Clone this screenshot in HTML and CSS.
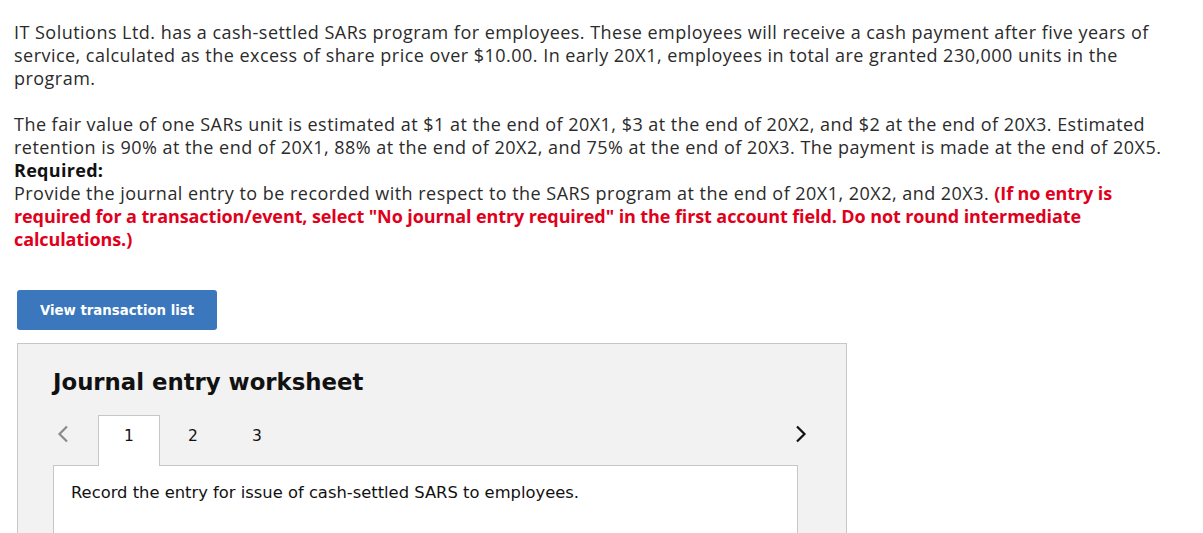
FILE: index.html
```html
<!DOCTYPE html>
<html>
<head>
<meta charset="utf-8">
<link rel="stylesheet" href="styles.css">
</head>
<body>
<div class="page">
  <p class="para">IT Solutions Ltd. has a cash-settled SARs program for employees. These employees will receive a cash payment after five years of service, calculated as the excess of share price over $10.00. In early 20X1, employees in total are granted 230,000 units in the program.</p>
  <p class="para">The fair value of one SARs unit is estimated at $1 at the end of 20X1, $3 at the end of 20X2, and $2 at the end of 20X3. Estimated retention is 90% at the end of 20X1, 88% at the end of 20X2, and 75% at the end of 20X3. The payment is made at the end of 20X5.<br><strong>Required:</strong><br>Provide the journal entry to be recorded with respect to the SARS program at the end of 20X1, 20X2, and 20X3. <strong class="red">(If no entry is required for a transaction/event, select "No journal entry required" in the first account field. Do not round intermediate calculations.)</strong></p>
  <button class="btn">View transaction list</button>
  <div class="worksheet">
    <h2 class="ws-title">Journal entry worksheet</h2>
    <div class="tabs">
      <span class="arrow prev"><svg width="14" height="18" viewBox="0 0 14 18"><path d="M11 1.5 L3.5 9 L11 16.5" fill="none" stroke="#8a8a8a" stroke-width="2.2"/></svg></span>
      <span class="tab active">1</span>
      <span class="tab">2</span>
      <span class="tab">3</span>
      <span class="arrow next"><svg width="14" height="18" viewBox="0 0 14 18"><path d="M3 1.5 L10.5 9 L3 16.5" fill="none" stroke="#111" stroke-width="2.2"/></svg></span>
    </div>
    <div class="panel">
      <p class="panel-text">Record the entry for issue of cash-settled SARS to employees.</p>
    </div>
  </div>
</div>
</body>
</html>
```
FILE: styles.css
```css
html, body { margin: 0; padding: 0; background: #fff; }
.page {
  padding: 21px 14px 0 14px;
  font-family: "Open Sans", "Liberation Sans", sans-serif;
  color: #2b2b2b;
}
.para {
  margin: 0 0 23px 0;
  font-size: 18px;
  line-height: 23px;
  letter-spacing: 0.47px;
}
.para strong { font-weight: 700; color: #111; letter-spacing: 0.3px; }
.para strong.red { color: #e0001b; letter-spacing: -0.1px; }
.btn {
  display: block;
  margin: 39px 0 0 3px;
  width: 200px;
  height: 40px;
  background: #3b77bd;
  border: none;
  border-radius: 3px;
  color: #fff;
  font-family: Verdana, "DejaVu Sans", sans-serif;
  font-weight: bold;
  font-size: 13.3px;
  padding: 0;
  text-align: center;
}
.worksheet {
  margin: 13px 0 0 3px;
  width: 830px;
  height: 190px;
  background: #f2f2f2;
  border: 1px solid #c6c6c6;
  border-bottom: none;
  box-sizing: border-box;
  padding: 23px 48px 0 35px;
  font-family: Verdana, "DejaVu Sans", sans-serif;
}
.ws-title {
  margin: 0;
  font-size: 22.8px;
  font-weight: bold;
  color: #111;
  line-height: 30px;
}
.tabs {
  display: flex;
  align-items: stretch;
  height: 50px;
  margin-top: 18px;
  position: relative;
}
.arrow { display: flex; align-items: center; height: 38px; }
.prev { width: 42px; padding-left: 3px; }
.next { margin-left: auto; margin-right: -10px; }
.tab {
  width: 62px;
  margin-right: 2px;
  text-align: center;
  font-size: 15.5px;
  color: #111;
  padding-top: 11px;
  box-sizing: border-box;
  border: 1px solid transparent;
  border-bottom: none;
}
.tab.active {
  background: #fff;
  border-color: #c6c6c6;
  position: relative;
  z-index: 2;
  height: 51px;
}
.panel {
  background: #fff;
  border: 1px solid #c6c6c6;
  border-bottom: none;
  height: 80px;
}
.panel-text {
  margin: 0;
  padding: 17px 17px;
  font-size: 16.35px;
  color: #111;
}
```
